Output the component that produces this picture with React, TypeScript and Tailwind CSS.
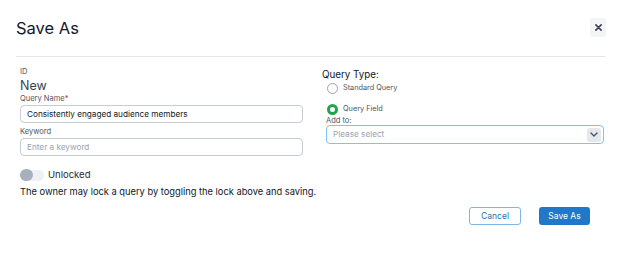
import { type ReactNode } from "react";

export default function App(): ReactNode {
  return (
    <div className="h-[267px] w-[622px] overflow-hidden bg-white font-['Inter',sans-serif] text-[#1f2937]">
      <div className="mx-4 flex h-[57px] items-center justify-between border-b border-[#e5e7eb]">
        <h1 className="pt-[1px] text-[16.5px] leading-none text-[#111827]">Save As</h1>
        <button className="mb-[2px] flex h-[19px] w-[16px] items-center justify-center rounded-[2px] bg-[#f3f4f6] text-[#374151]">
          <svg width="7" height="7" viewBox="0 0 8 8">
            <path d="M1 1L7 7M7 1L1 7" stroke="currentColor" strokeWidth="1.8" strokeLinecap="round" />
          </svg>
        </button>
      </div>

      <div className="flex pl-5 pt-[10px]">
        <div className="flex w-[283px] flex-col">
          <span className="text-[7.5px] leading-[10px] text-[#4b5563]">ID</span>
          <span className="mt-[1px] text-[12.5px] leading-[15px] text-[#374151]">New</span>
          <label className="mt-[1px] text-[7.5px] leading-[10px] text-[#4b5563]">
            Query Name<span className="text-[#dc2626]">*</span>
          </label>
          <div className="mt-[1px] flex h-[18px] items-center rounded-[4px] border border-[#c7ccd3] px-[6px] text-[8.2px] text-[#111827]">
            Consistently engaged audience members
          </div>
          <label className="mt-[4px] text-[7.5px] leading-[10px] text-[#4b5563]">Keyword</label>
          <div className="mt-[1px] flex h-[18px] items-center rounded-[4px] border border-[#c7ccd3] px-[6px] text-[8.2px] text-[#9ca3af]">
            Enter a keyword
          </div>

          <div className="mt-[13px] flex items-center gap-[4px]">
            <div className="flex h-[11px] w-[24px] items-center rounded-full bg-[#eef0f3]">
              <div className="h-[12px] w-[13px] rounded-full bg-[#a9b0bd]" />
            </div>
            <span className="text-[9.5px] leading-[12px] text-[#1f2937]">Unlocked</span>
          </div>
          <p className="mt-[5px] whitespace-nowrap text-[9.3px] leading-[12px] text-[#111827]">
            The owner may lock a query by toggling the lock above and saving.
          </p>
        </div>

        <div className="ml-[19px] flex w-[282px] flex-col">
          <span className="mt-[1px] text-[9.8px] leading-[13px] text-[#111827]">Query Type:</span>
          <div className="mt-[2px] flex flex-col gap-[10px] pl-[5px]">
            <div className="flex h-[11px] items-center gap-[5px]">
              <span className="h-[11px] w-[11px] rounded-full border border-[#9ca3af] bg-white" />
              <span className="text-[7.3px] text-[#4b5563]">Standard Query</span>
            </div>
            <div className="flex h-[11px] items-center gap-[5px]">
              <span className="h-[11px] w-[11px] rounded-full border-[3.5px] border-[#1fa64a] bg-white" />
              <span className="text-[7.3px] text-[#4b5563]">Query Field</span>
            </div>
          </div>
          <label className="mt-[1px] pl-[4px] text-[7.5px] leading-[9px] text-[#4b5563]">Add to:</label>
          <div className="ml-[4px] flex h-[19px] items-center justify-between rounded-[4px] border-[1.5px] border-[#7cc2f3] pl-[6px] pr-[2px]">
            <span className="text-[8.2px] text-[#9ca3af]">Please select</span>
            <span className="flex h-[14px] w-[14px] items-center justify-center rounded-[3px] bg-[#e5e7eb] text-[#4b5563]">
              <svg width="8" height="5" viewBox="0 0 8 5">
                <path d="M1 1L4 4L7 1" fill="none" stroke="currentColor" strokeWidth="1.4" strokeLinecap="round" strokeLinejoin="round" />
              </svg>
            </span>
          </div>
        </div>
      </div>

      <div className="mr-[32px] mt-[9px] flex justify-end gap-[18px]">
        <button className="flex h-[18px] w-[52px] items-center justify-center rounded-[3px] border border-[#7cb6e6] text-[8.5px] text-[#1d6fb8]">
          Cancel
        </button>
        <button className="flex h-[18px] w-[51px] items-center justify-center rounded-[3px] bg-[#1f78c8] text-[8.5px] text-white">
          Save As
        </button>
      </div>
    </div>
  );
}
